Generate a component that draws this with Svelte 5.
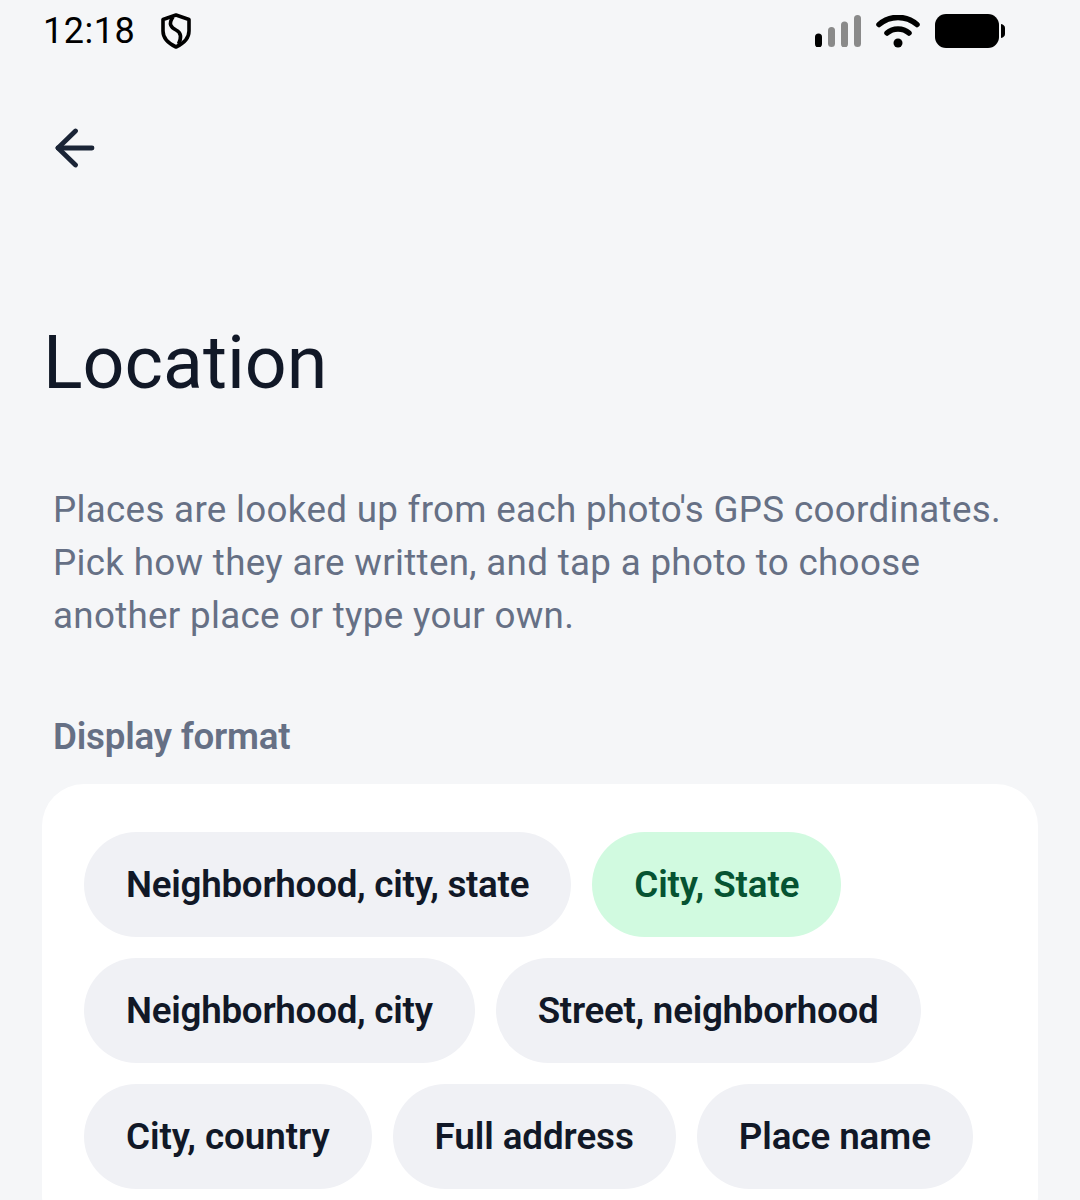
<script>
  const formats = [
    { label: "Neighborhood, city, state", tight: true },
    { label: "City, State", selected: true },
    { label: "Neighborhood, city", tight: true },
    { label: "Street, neighborhood", tight: true },
    { label: "City, country" },
    { label: "Full address" },
    { label: "Place name" }
  ];
</script>

<div class="screen">
  <div class="status">
    <div class="status-left">
      <span class="time">12:18</span>
      <svg class="shield" width="32" height="36" viewBox="0 0 32 36" fill="none" stroke="#000" stroke-width="3.6" stroke-linejoin="round">
        <path d="M16 2 L29 6.5 V18 C29 25 23.500 30.500 16 34 C8.500 30.500 3 25 3 18 V6.500 Z" />
        <path d="M13 4 C8 11 11 14.500 16 17 C21 19.500 22 24 18.500 31" />
      </svg>
    </div>
    <div class="status-right">
      <svg width="46" height="32" viewBox="0 0 46 32">
        <rect x="0" y="18.500" width="7" height="14" rx="3.500" fill="#000" />
        <rect x="13" y="12" width="7" height="20" rx="3.500" fill="#8a8a8a" />
        <rect x="26" y="6.500" width="7" height="26" rx="3.500" fill="#8a8a8a" />
        <rect x="39" y="0" width="7" height="32" rx="3.500" fill="#8a8a8a" />
      </svg>
      <svg width="44" height="33" viewBox="0 0 44 33" fill="none" stroke="#000" stroke-width="5.500" stroke-linecap="round">
        <path d="M3 9.500 C14 0 30 0 41 9.500" />
        <path d="M11 18 C17 12.500 27 12.500 33 18" />
        <circle cx="22" cy="28" r="4.500" fill="#000" stroke="none" />
      </svg>
      <svg width="70" height="34" viewBox="0 0 70 34">
        <rect x="0" y="0" width="64" height="34" rx="11" fill="#000" />
        <path d="M66 10 C68.500 10.500 70 12 70 14 V20 C70 22 68.500 23.500 66 24 Z" fill="#000" />
      </svg>
    </div>
  </div>

  <button class="back" aria-label="Back">
    <svg width="42" height="40" viewBox="0 0 42 40" fill="none" stroke="#1a2436" stroke-width="4.800" stroke-linecap="round" stroke-linejoin="round">
      <path d="M38 20 H4" />
      <path d="M21.500 3 L4 20 L21.500 37" />
    </svg>
  </button>

  <h1>Location</h1>

  <p class="intro">
    Places are looked up from each photo's GPS coordinates.<br>
    Pick how they are written, and tap a photo to choose<br>
    another place or type your own.
  </p>

  <div class="section-label">Display format</div>

  <div class="card">
    <div class="chips">
      {#each formats as f}
        <span class="chip" class:selected={f.selected} class:tight={f.tight}>{f.label}</span>
      {/each}
    </div>
  </div>
</div>

<style>
  :global(body) {
    margin: 0;
    background: #f5f6f8;
  }

  .screen {
    height: 1200px;
    overflow: hidden;
    background: #f5f6f8;
    font-family: Roboto, sans-serif;
    color: #111827;
    box-sizing: border-box;
  }

  .status {
    display: flex;
    justify-content: space-between;
    align-items: center;
    height: 62px;
    padding: 0 75px 0 43px;
  }

  .status-left {
    display: flex;
    align-items: center;
    gap: 25px;
  }

  .time {
    font-size: 36px;
    color: #000;
    letter-spacing: 0.5px;
  }

  .status-right {
    display: flex;
    align-items: center;
    gap: 15px;
  }

  .status-right svg,
  .shield,
  .back svg {
    display: block;
  }

  .back {
    display: block;
    margin: 66px 0 0 54px;
    padding: 0;
    border: 0;
    background: none;
  }

  h1 {
    margin: 152px 0 0;
    padding: 0 0 0 43px;
    font-size: 73.500px;
    font-weight: 400;
    line-height: 86px;
    color: #111827;
  }

  .intro {
    margin: 77px 0 0;
    padding-left: 53px;
    font-size: 36.750px;
    letter-spacing: 0.31px;
    line-height: 53px;
    color: #667085;
    white-space: nowrap;
  }

  .section-label {
    margin-top: 68px;
    padding-left: 53px;
    font-size: 36.750px;
    letter-spacing: -0.22px;
    line-height: 53px;
    font-weight: 600;
    color: #667085;
  }

  .card {
    margin: 21px 42px 0;
    padding: 48px 42px;
    background: #fff;
    border-radius: 42px;
  }

  .chips {
    display: flex;
    flex-wrap: wrap;
    gap: 21px;
  }

  .chip {
    display: block;
    height: 105px;
    line-height: 105px;
    padding: 0 42px;
    border-radius: 52.500px;
    background: #f0f1f5;
    font-size: 36.750px;
    letter-spacing: -0.08px;
    font-weight: 600;
    color: #111827;
    white-space: nowrap;
  }

  .chip.tight {
    letter-spacing: -0.26px;
  }

  .chip.selected {
    background: #d1fae0;
    color: #065332;
  }
</style>
